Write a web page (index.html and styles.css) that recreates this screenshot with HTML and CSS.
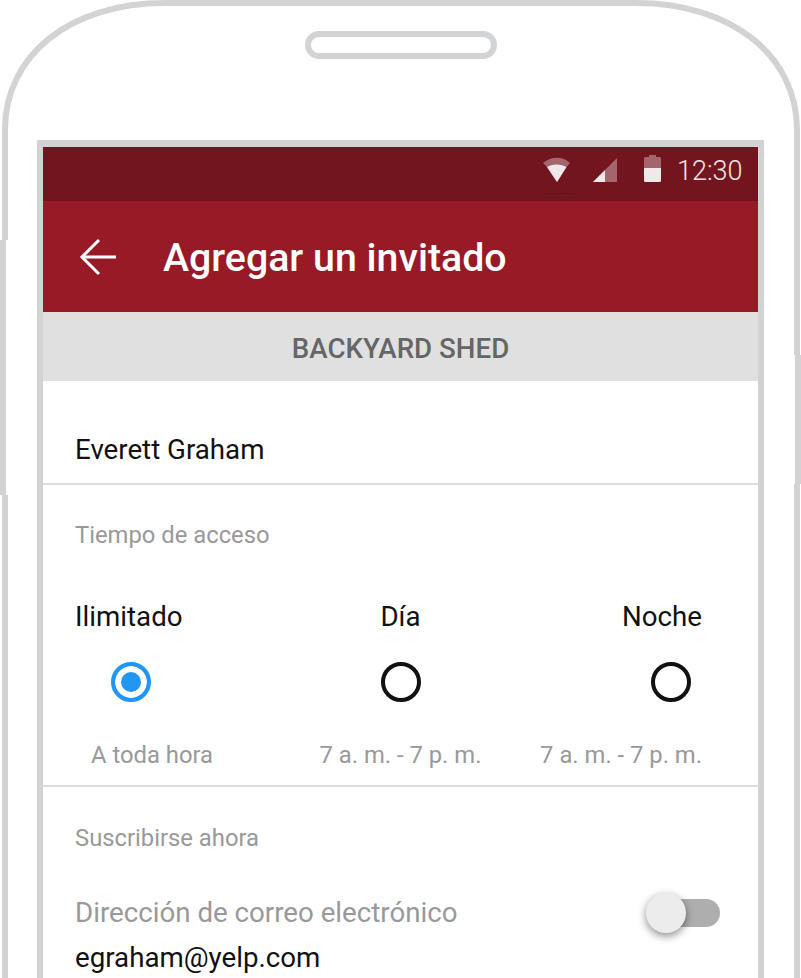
FILE: index.html
```html
<!DOCTYPE html>
<html lang="en">
  <head>
    <meta charset="UTF-8" />
    <meta name="viewport" content="width=device-width, initial-scale=1.0" />
    <title>Agregar un invitado</title>
    <link rel="stylesheet" href="styles.css">
  </head>
  <body>
    <div class="phone">
      <!-- phone outline, sits behind the screen -->
      <svg class="outline" width="801" height="978" viewBox="0 0 801 978" fill="none" stroke="#d1d3d4" stroke-width="6">
        <path d="M5 240V130C5 55 70 3 165 3H636C731 3 797 55 797 130V355" />
        <path d="M3 240V495" />
        <path d="M5 495V978" />
        <path d="M798 355V484" />
        <path d="M797 484V978" />
        <rect x="308" y="34" width="186" height="22" rx="11" />
      </svg>

      <div class="screen">
        <div class="status-bar">
          <svg class="ic-wifi" width="28" height="26" viewBox="0 0 28 26">
            <path d="M14 25L4 10L0 6C8-1 20-1 27 6L23.500 10Z" fill="#fff" fill-opacity=".35" />
            <path d="M14 25L4 10C9 6.500 18 6.500 23.500 10Z" fill="#f1e8e9" />
          </svg>
          <svg class="ic-signal" width="24" height="24" viewBox="0 0 24 24">
            <path d="M0 24L24 0V24Z" fill="#fff" fill-opacity=".35" />
            <path d="M0 24L12 12V24Z" fill="#f1e8e9" />
          </svg>
          <svg class="ic-battery" width="17" height="27" viewBox="0 0 17 27">
            <path d="M5 0H12V2H15.500Q17 2 17 3.500V13H0V3.500Q0 2 1.500 2H5Z" fill="#fff" fill-opacity=".35" />
            <path d="M0 13H17V25.500Q17 27 15.500 27H1.500Q0 27 0 25.500Z" fill="#f1e8e9" />
          </svg>
          <span class="clock">12:30</span>
          <span class="status-mark"></span>
        </div>

        <div class="app-bar">
          <svg class="ic-back" width="38" height="38" viewBox="0 0 38 38" fill="none" stroke="#fff" stroke-width="3">
            <path d="M37 19H3" />
            <path d="M20 2L3 19L20 36" />
          </svg>
          <h1 class="title">Agregar un invitado</h1>
        </div>

        <div class="sub-header">BACKYARD SHED</div>

        <div class="name-row">Everett Graham</div>

        <div class="access">
          <div class="section-label">Tiempo de acceso</div>
          <div class="access-row access-names">
            <span>Ilimitado</span>
            <span>Día</span>
            <span>Noche</span>
          </div>
          <div class="access-row access-radios">
            <span class="radio active"></span>
            <span class="radio"></span>
            <span class="radio"></span>
          </div>
          <div class="access-row access-hours">
            <span>A toda hora</span>
            <span>7 a. m. - 7 p. m.</span>
            <span>7 a. m. - 7 p. m.</span>
          </div>
        </div>

        <div class="subscribe">
          <div class="section-label">Suscribirse ahora</div>
          <div class="email-row">
            <div>
              <div class="email-label">Dirección de correo electrónico</div>
              <div class="email-value">egraham@yelp.com</div>
            </div>
            <div class="toggle"><span class="thumb"></span></div>
          </div>
        </div>
      </div>
    </div>
  </body>
</html>
```

FILE: styles.css
```css
* {
  margin: 0;
  padding: 0;
  box-sizing: border-box;
}

body {
  background-color: #fff;
  font-family: Roboto, "Liberation Sans", sans-serif;
  overflow: hidden;
}

.phone {
  position: relative;
  width: 801px;
  height: 978px;
  padding: 140px 37px 0;
  overflow: hidden;
}

.outline {
  position: absolute;
  top: 0;
  left: 0;
}

.screen {
  position: relative;
  width: 727px;
  height: 838px;
  border: 6px solid #d1d3d4;
  border-top-width: 7px;
  border-bottom: none;
  background-color: #fff;
}

.status-bar {
  position: relative;
  height: 54px;
  background-color: #73151e;
  display: flex;
  align-items: flex-start;
  color: #f1e8e9;
}

.ic-wifi {
  margin: 10px 0 0 500px;
}

.ic-signal {
  margin: 11px 0 0 22px;
}

.ic-battery {
  margin: 8px 0 0 27px;
}

.clock {
  margin: 9px 0 0 16px;
  font-size: 27px;
  line-height: 30px;
  font-weight: 300;
}

.status-mark {
  position: absolute;
  top: 46px;
  left: 502px;
  width: 32px;
  border-top: 1px dashed #5f1018;
}

.app-bar {
  height: 111px;
  background-color: #981a26;
  display: flex;
  align-items: center;
  padding-left: 36px;
  color: #fff;
}

.ic-back {
  flex: none;
}

.title {
  margin-left: 46px;
  padding-top: 2px;
  font-size: 39.300px;
  font-weight: 500;
}

.sub-header {
  height: 69px;
  padding-top: 2px;
  background-color: #e0e0e0;
  color: #666;
  font-size: 27.700px;
  font-weight: 500;
  line-height: 69px;
  text-align: center;
}

.name-row {
  height: 104px;
  padding: 51px 32px 0;
  border-bottom: 2px solid #ddd;
  font-size: 27.700px;
  line-height: 36px;
  color: #111;
}

.section-label {
  font-size: 23.800px;
  line-height: 30px;
  color: #999;
}

.access {
  height: 302px;
  padding: 35px 32px 0;
  border-bottom: 2px solid #ddd;
}

/* middle cell stays on the screen centre, outer cells are inset per row */
.access-row {
  display: grid;
  grid-template-columns: 1fr auto 1fr;
}

.access-row > :last-child {
  justify-self: end;
}

.access-names {
  margin-top: 49px;
  font-size: 27.700px;
  line-height: 36px;
  color: #111;
}

.access-names > :last-child {
  margin-right: 24px;
}

.access-radios {
  margin-top: 27px;
}

.access-radios > :first-child {
  margin-left: 36px;
}

.access-radios > :last-child {
  margin-right: 35px;
}

.radio {
  width: 40px;
  height: 40px;
  border: 4px solid #111;
  border-radius: 50%;
}

.radio.active {
  border-color: #2196f3;
  background-color: #2196f3;
  box-shadow: inset 0 0 0 6px #fff;
}

.access-hours {
  margin-top: 35px;
  font-size: 23.800px;
  line-height: 36px;
  color: #999;
}

.access-hours > :first-child {
  margin-left: 16px;
}

.access-hours > :last-child {
  margin-right: 24px;
}

.subscribe {
  padding: 36px 38px 0 32px;
}

.email-row {
  margin-top: 37px;
  display: flex;
  justify-content: space-between;
  align-items: flex-start;
}

.email-label {
  font-size: 27.700px;
  line-height: 45px;
  color: #999;
}

.email-value {
  font-size: 27.700px;
  line-height: 45px;
  color: #111;
}

.toggle {
  position: relative;
  width: 66px;
  height: 28px;
  margin-top: 9px;
  border-radius: 14px;
  background-color: #aeaeae;
}

.thumb {
  position: absolute;
  top: -6px;
  left: -8px;
  width: 40px;
  height: 40px;
  border-radius: 50%;
  background-color: #ececec;
  box-shadow: 0 3px 8px rgba(0, 0, 0, 0.45);
}
```
